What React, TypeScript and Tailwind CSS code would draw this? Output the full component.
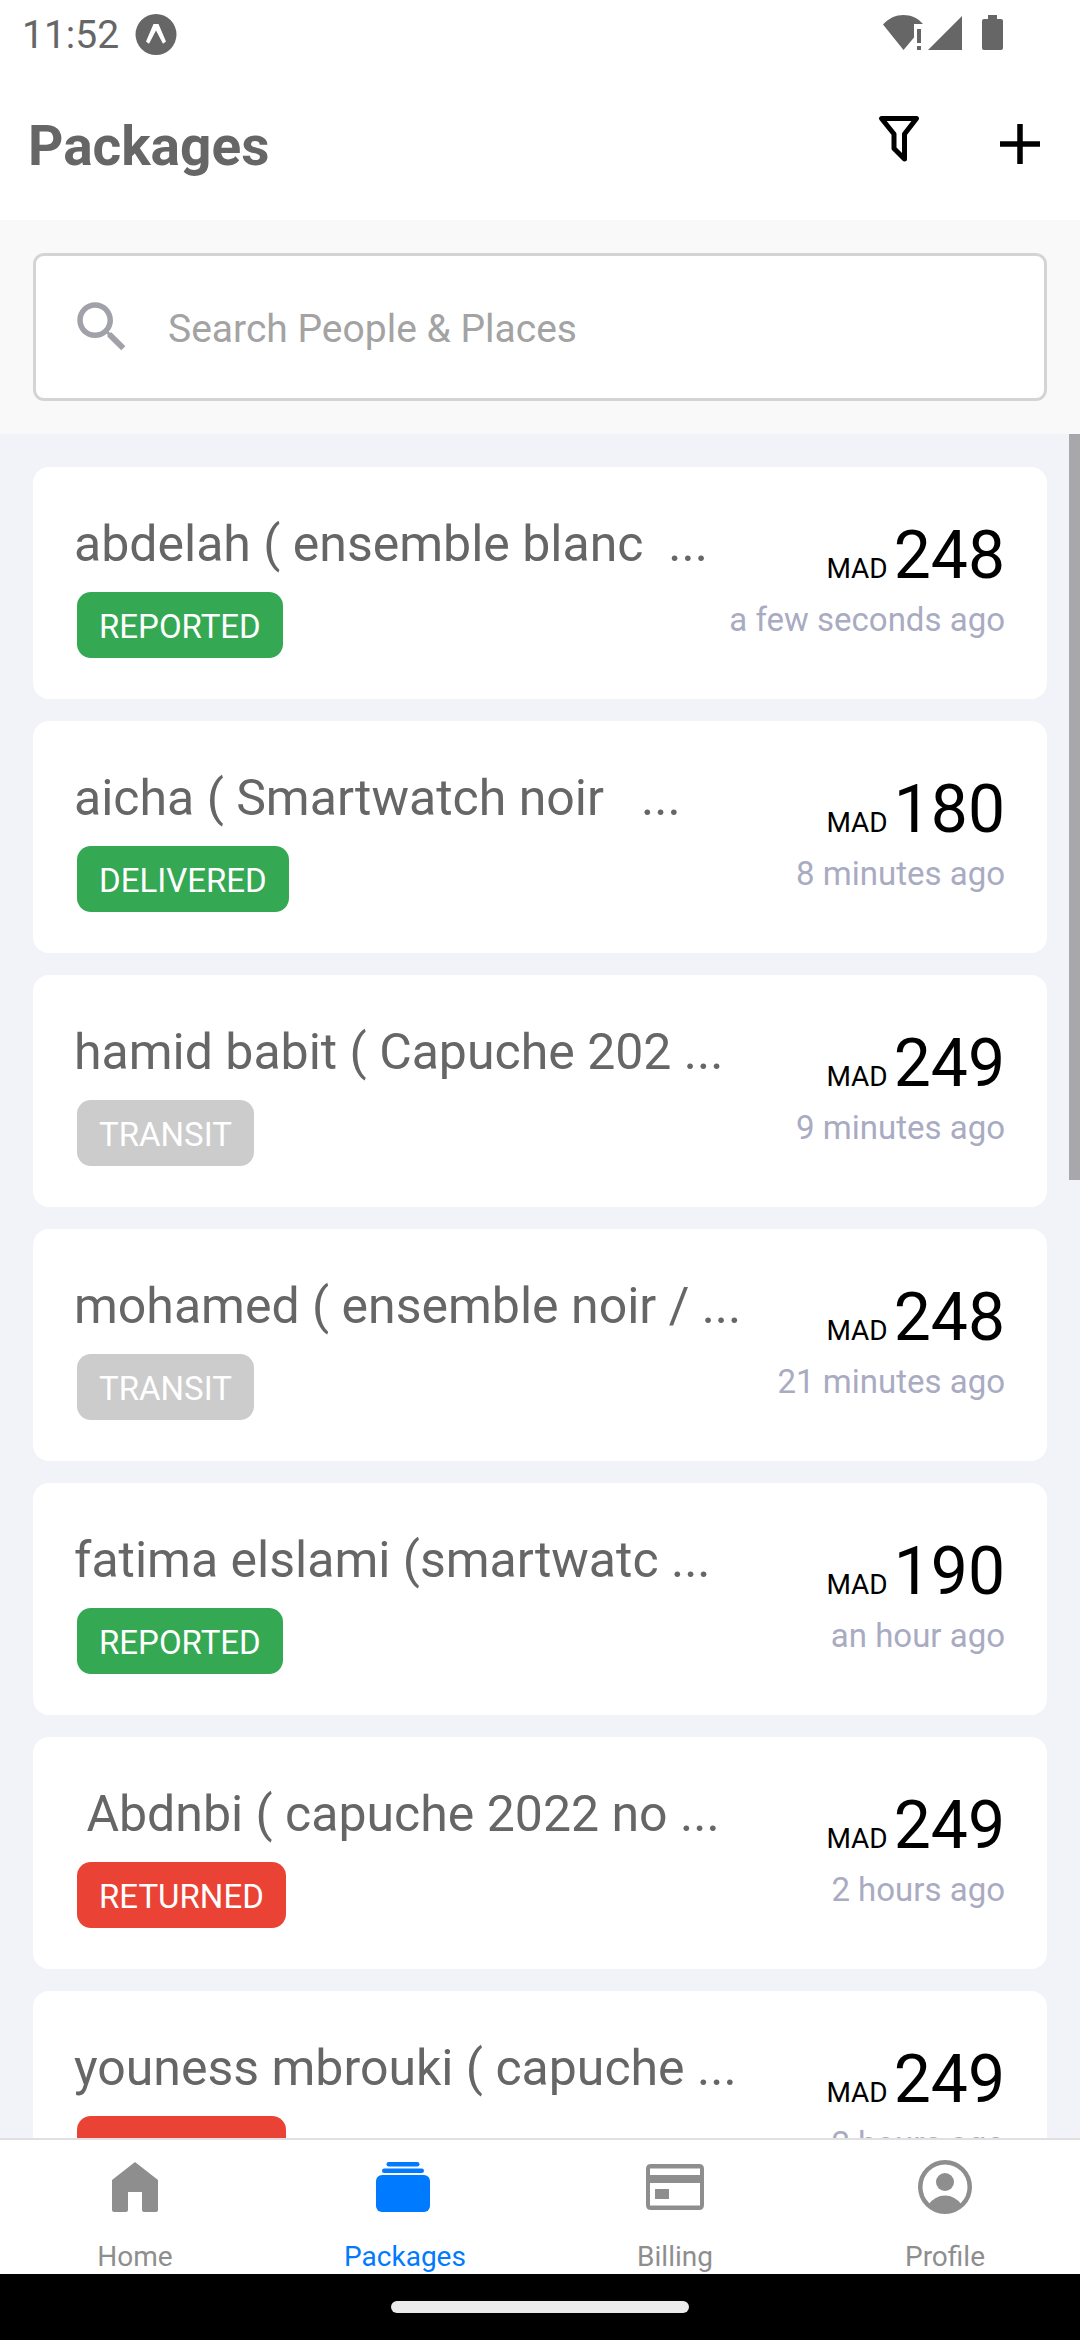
import React, { useState } from 'react';
import clsx from 'clsx';

type Status = 'REPORTED' | 'DELIVERED' | 'TRANSIT' | 'RETURNED';

interface PackageItem {
  id: number;
  title: string;
  status: Status;
  price: number;
  time: string;
}

const packages: PackageItem[] = [
  { id: 1, title: 'abdelah ( ensemble blanc  ...', status: 'REPORTED', price: 248, time: 'a few seconds ago' },
  { id: 2, title: 'aicha ( Smartwatch noir   ...', status: 'DELIVERED', price: 180, time: '8 minutes ago' },
  { id: 3, title: 'hamid babit ( Capuche 202 ...', status: 'TRANSIT', price: 249, time: '9 minutes ago' },
  { id: 4, title: 'mohamed ( ensemble noir / ...', status: 'TRANSIT', price: 248, time: '21 minutes ago' },
  { id: 5, title: 'fatima elslami (smartwatc ...', status: 'REPORTED', price: 190, time: 'an hour ago' },
  { id: 6, title: ' Abdnbi ( capuche 2022 no ...', status: 'RETURNED', price: 249, time: '2 hours ago' },
  { id: 7, title: 'youness mbrouki ( capuche ...', status: 'RETURNED', price: 249, time: '2 hours ago' },
];

const statusColors: Record<Status, string> = {
  REPORTED: 'bg-[#34a853]',
  DELIVERED: 'bg-[#34a853]',
  TRANSIT: 'bg-[#cccccc]',
  RETURNED: 'bg-[#ea4335]',
};

const StatusBar: React.FC = () => (
  <div className="flex h-[66px] shrink-0 items-start justify-between pl-[22px] pr-[76px] pt-[12px] text-[#666666]">
    <div className="flex items-center gap-4">
      <span className="text-[39px] leading-[46px]">11:52</span>
      <svg width="42" height="42" viewBox="0 0 42 42">
        <circle cx="21" cy="20.500" r="20.500" fill="currentColor" />
        <path d="M18.500 10h5L31 27.500l-3 2.200-7-13.200-7 13.200-3-2.200z" fill="#fff" />
      </svg>
    </div>
    <svg width="122" height="42" viewBox="0 0 122 42" fill="currentColor">
      <path d="M1 12.500C7 6 14 3 21.500 3S36 6 41 12H32v13.500L21.500 38z" />
      <path d="M35 17h4v14h-4zM35 34h4v4h-4z" />
      <path d="M46 38 80 4v34z" />
      <path d="M106 3h9v4h4q2 0 2 2v27q0 2-2 2h-17q-2 0-2-2V9q0-2 2-2h4z" />
    </svg>
  </div>
);

const Header: React.FC = () => (
  <header className="flex h-[154px] shrink-0 items-center justify-between bg-white pl-7 pr-[39px] pt-[2px]">
    <h1 className="pt-1 text-[55px] font-bold leading-[64px] text-[#666666]">Packages</h1>
    <div className="flex items-center gap-[78px]">
      <button aria-label="Filter" className="pb-[10px]">
        <svg width="44" height="48" viewBox="0 0 44 48" fill="none" stroke="#000" strokeWidth="5" strokeLinejoin="round">
          <path d="M4.500 3.500h35L27.500 19v25L17 33.500V19z" />
        </svg>
      </button>
      <button aria-label="Add package">
        <svg width="42" height="42" viewBox="0 0 42 42" fill="none" stroke="#000" strokeWidth="5.500">
          <path d="M21 1v40M1 21h40" />
        </svg>
      </button>
    </div>
  </header>
);

const PackageCard: React.FC<{ item: PackageItem }> = ({ item }) => (
  <li className="flex h-[232px] shrink-0 justify-between rounded-[16px] bg-white pl-[41px] pr-[42px]">
    <div className="flex flex-col items-start pt-[48px]">
      <h2 className="whitespace-pre text-[50px] leading-[58px] text-[#666666]">{item.title}</h2>
      <span
        className={clsx(
          'ml-[3px] mt-[19px] rounded-[14px] px-[22px] pb-[11px] pt-[15px] text-[33px] leading-[40px] text-white',
          statusColors[item.status]
        )}
      >
        {item.status}
      </span>
    </div>
    <div className="flex flex-col items-end pt-[58px]">
      <div className="flex items-baseline gap-[6px] leading-[62px] text-black">
        <span className="text-[28px]">MAD</span>
        <span className="text-[66px]">{item.price}</span>
      </div>
      <span className="text-[33px] leading-[40px] text-[#a9abc2]">{item.time}</span>
    </div>
  </li>
);

const tabs = [
  {
    name: 'Home',
    icon: <path d="M33 8 56 26v30q0 2-2 2H42q-2 0-2-2V38H26v18q0 2-2 2H12q-2 0-2-2V26z" />,
  },
  {
    name: 'Packages',
    icon: (
      <>
        <rect x="14.500" y="8" width="33" height="4.500" rx="2.250" />
        <rect x="10" y="14.500" width="42" height="4.500" rx="2.250" />
        <rect x="4" y="21" width="54" height="37" rx="6" />
      </>
    ),
  },
  {
    name: 'Billing',
    icon: (
      <path
        fillRule="evenodd"
        d="M9 10h48q5 0 5 5v36q0 5-5 5H9q-5 0-5-5V15q0-5 5-5zM8 14.500V21h50v-6.500zM8 29v22.500h50V29zM13 35h14v10H13z"
      />
    ),
  },
  {
    name: 'Profile',
    icon: (
      <>
        <circle cx="33" cy="33" r="24.750" fill="none" stroke="currentColor" strokeWidth="4.500" />
        <circle cx="33" cy="28" r="9" />
        <path d="M16 51q7-9.500 17-9.500T50 51q-7 8.500-17 8.500T16 51z" />
      </>
    ),
  },
];

const TabBar: React.FC<{ active: string; onChange: (name: string) => void }> = ({ active, onChange }) => (
  <nav className="grid h-[136px] shrink-0 grid-cols-4 border-t-2 border-[#e0e0e2] bg-white">
    {tabs.map(tab => (
      <button
        key={tab.name}
        onClick={() => onChange(tab.name)}
        className={clsx(
          'flex flex-col items-center gap-[21px] pt-[14px]',
          tab.name === active ? 'text-[#007aff]' : 'text-[#8e8e8f]'
        )}
      >
        <svg width="66" height="66" viewBox="0 0 66 66" fill="currentColor">
          {tab.icon}
        </svg>
        <span className="text-[28px] leading-[32px]">{tab.name}</span>
      </button>
    ))}
  </nav>
);

const App: React.FC = () => {
  const [query, setQuery] = useState('');
  const [active, setActive] = useState('Packages');

  return (
    <div className="flex h-screen flex-col overflow-hidden bg-white font-[Roboto,sans-serif]">
      <StatusBar />
      <Header />

      {/* Search */}
      <div className="shrink-0 bg-[#f9f9f9] p-[33px]">
        <label className="flex h-[148px] items-center gap-[33px] rounded-[11px] border-[3px] border-[#d3d4d4] bg-white pl-[33px] pr-6">
          <svg width="66" height="66" viewBox="0 0 24 24" fill="#a1a1a9" className="shrink-0">
            <path d="M15.500 14h-.790l-.280-.270C15.410 12.590 16 11.110 16 9.500 16 5.910 13.090 3 9.500 3S3 5.910 3 9.500 5.910 16 9.500 16c1.610 0 3.090-.590 4.230-1.570l.270.280v.790l5 4.990L20.490 19l-4.990-5zm-6 0C7.010 14 5 11.990 5 9.500S7.010 5 9.500 5 14 7.010 14 9.500 11.990 14 9.500 14z" />
          </svg>
          <input
            type="text"
            aria-label="Search People & Places"
            placeholder="Search People & Places"
            value={query}
            onChange={e => setQuery(e.target.value)}
            className="min-w-0 flex-1 pt-1 text-[39px] leading-[46px] text-[#666666] outline-none placeholder:text-[#a3a3a3]"
          />
        </label>
      </div>

      {/* Package list */}
      <main className="relative min-h-0 flex-1 overflow-hidden bg-[#f2f3f9]">
        <ul className="flex flex-col gap-[22px] p-[33px]">
          {packages.map(item => (
            <PackageCard key={item.id} item={item} />
          ))}
        </ul>
        <div className="absolute right-0 top-0 h-[746px] w-[11px] bg-[#a8a8ac]" />
      </main>

      <TabBar active={active} onChange={setActive} />

      {/* Gesture bar */}
      <div className="flex h-[66px] shrink-0 items-center justify-center bg-black">
        <div className="h-3 w-[298px] rounded-full bg-[#ebebeb]" />
      </div>
    </div>
  );
};

export default App;
